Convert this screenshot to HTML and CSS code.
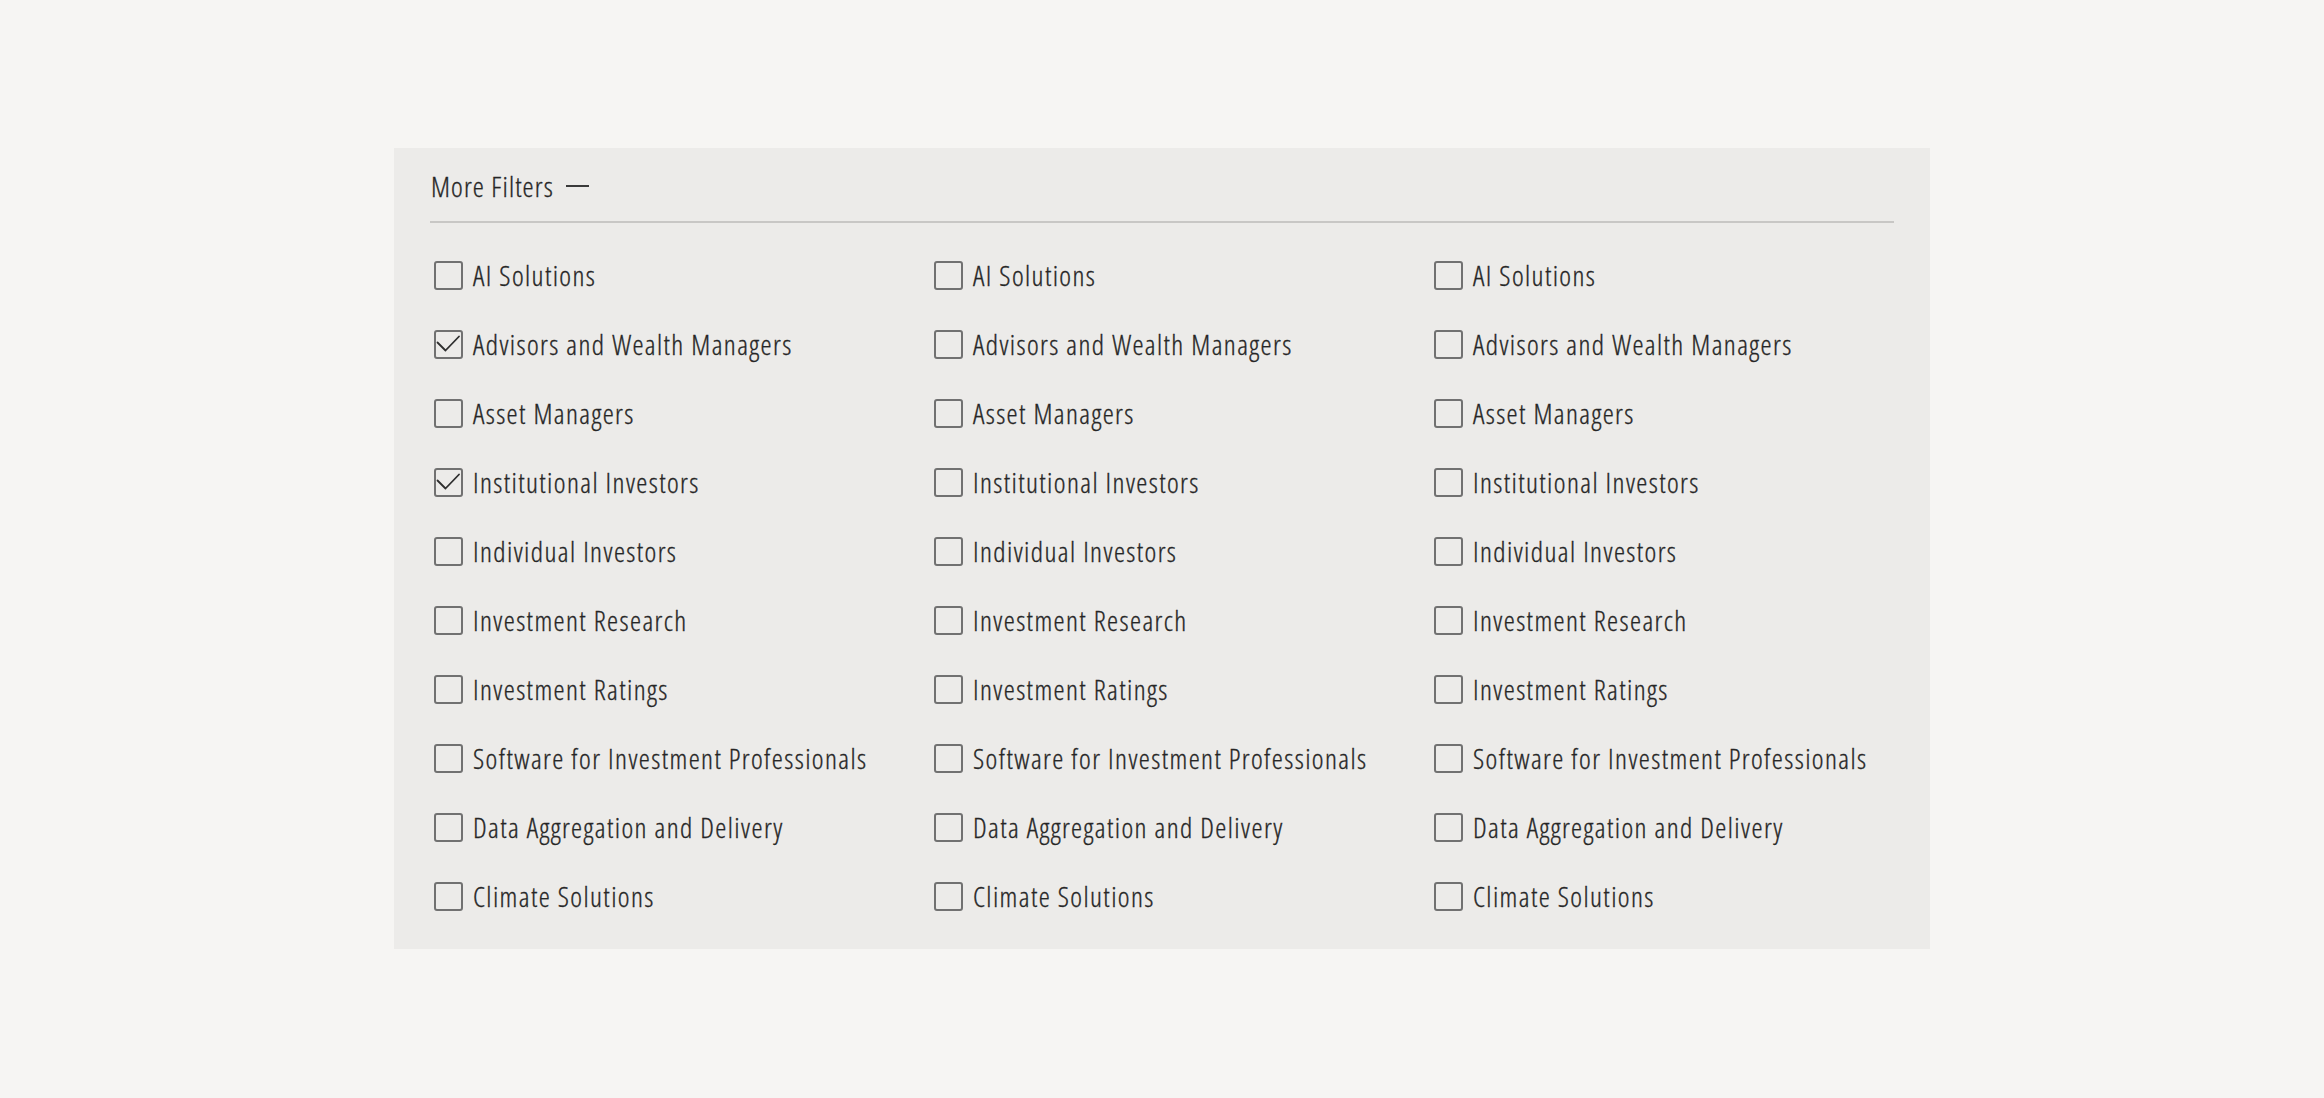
FILE: index.html
```html
<!DOCTYPE html>
<html lang="en">
<head>
<meta charset="utf-8">
<title>More Filters</title>
<link rel="stylesheet" href="styles.css">
</head>
<body>
<main class="page">
  <section class="panel">
    <header class="panel-head">
      <span class="panel-title">More Filters</span>
      <span class="dash"></span>
    </header>
    <div class="divider"></div>
    <div class="grid">
      <ul class="col">
        <li class="item"><span class="box"></span><span class="label">AI Solutions</span></li>
        <li class="item"><span class="box checked"><svg viewBox="0 0 29 29"><path d="M3.5 12.5 L11.5 20.5 L25 6.5"/></svg></span><span class="label">Advisors and Wealth Managers</span></li>
        <li class="item"><span class="box"></span><span class="label">Asset Managers</span></li>
        <li class="item"><span class="box checked"><svg viewBox="0 0 29 29"><path d="M3.5 12.5 L11.5 20.5 L25 6.5"/></svg></span><span class="label">Institutional Investors</span></li>
        <li class="item"><span class="box"></span><span class="label">Individual Investors</span></li>
        <li class="item"><span class="box"></span><span class="label">Investment Research</span></li>
        <li class="item"><span class="box"></span><span class="label">Investment Ratings</span></li>
        <li class="item"><span class="box"></span><span class="label">Software for Investment Professionals</span></li>
        <li class="item"><span class="box"></span><span class="label">Data Aggregation and Delivery</span></li>
        <li class="item"><span class="box"></span><span class="label">Climate Solutions</span></li>
      </ul>
      <ul class="col">
        <li class="item"><span class="box"></span><span class="label">AI Solutions</span></li>
        <li class="item"><span class="box"></span><span class="label">Advisors and Wealth Managers</span></li>
        <li class="item"><span class="box"></span><span class="label">Asset Managers</span></li>
        <li class="item"><span class="box"></span><span class="label">Institutional Investors</span></li>
        <li class="item"><span class="box"></span><span class="label">Individual Investors</span></li>
        <li class="item"><span class="box"></span><span class="label">Investment Research</span></li>
        <li class="item"><span class="box"></span><span class="label">Investment Ratings</span></li>
        <li class="item"><span class="box"></span><span class="label">Software for Investment Professionals</span></li>
        <li class="item"><span class="box"></span><span class="label">Data Aggregation and Delivery</span></li>
        <li class="item"><span class="box"></span><span class="label">Climate Solutions</span></li>
      </ul>
      <ul class="col">
        <li class="item"><span class="box"></span><span class="label">AI Solutions</span></li>
        <li class="item"><span class="box"></span><span class="label">Advisors and Wealth Managers</span></li>
        <li class="item"><span class="box"></span><span class="label">Asset Managers</span></li>
        <li class="item"><span class="box"></span><span class="label">Institutional Investors</span></li>
        <li class="item"><span class="box"></span><span class="label">Individual Investors</span></li>
        <li class="item"><span class="box"></span><span class="label">Investment Research</span></li>
        <li class="item"><span class="box"></span><span class="label">Investment Ratings</span></li>
        <li class="item"><span class="box"></span><span class="label">Software for Investment Professionals</span></li>
        <li class="item"><span class="box"></span><span class="label">Data Aggregation and Delivery</span></li>
        <li class="item"><span class="box"></span><span class="label">Climate Solutions</span></li>
      </ul>
    </div>
  </section>
</main>
</body>
</html>
```

FILE: styles.css
```css
* { box-sizing: border-box; }

html, body {
  margin: 0;
  padding: 0;
  background: #f6f5f3;
}

body {
  font-family: "Open Sans", "Liberation Sans", sans-serif;
  font-stretch: 75%;
  font-weight: 300;
  color: #262626;
  -webkit-text-stroke: 0.3px #262626;
}

.page {
  padding: 148px 0 0 394px;
}

.panel {
  width: 1536px;
  height: 801px;
  background: #ecebe9;
  padding: 18px 36px 0 36px;
}

.panel-head {
  display: flex;
  align-items: center;
  height: 40px;
  padding-left: 1px;
}

.panel-title {
  font-size: 28px;
  line-height: 40px;
  letter-spacing: 1.1px;
}

.dash {
  width: 23px;
  height: 2px;
  background: #3a3a3a;
  margin-left: 12px;
  margin-top: -1px;
}

.divider {
  height: 2px;
  background: #c8c7c5;
  margin-top: 15px;
}

.grid {
  display: grid;
  grid-template-columns: 500px 500px 1fr;
  padding-left: 4px;
  margin-top: 38px;
}

.col {
  list-style: none;
  margin: 0;
  padding: 0;
  display: flex;
  flex-direction: column;
  gap: 40px;
}

.item {
  display: flex;
  align-items: center;
  height: 29px;
}

.box {
  width: 29px;
  height: 29px;
  flex: none;
  border: 2px solid #717171;
  border-radius: 3px;
  position: relative;
}

.box svg {
  position: absolute;
  left: -2px;
  top: -2px;
  width: 29px;
  height: 29px;
}

.box svg path {
  fill: none;
  stroke: #2e2e2e;
  stroke-width: 1.8;
  stroke-linecap: round;
  stroke-linejoin: round;
}

.label {
  margin-left: 10px;
  font-size: 28px;
  line-height: 29px;
  letter-spacing: 1.4px;
  white-space: nowrap;
}
```
